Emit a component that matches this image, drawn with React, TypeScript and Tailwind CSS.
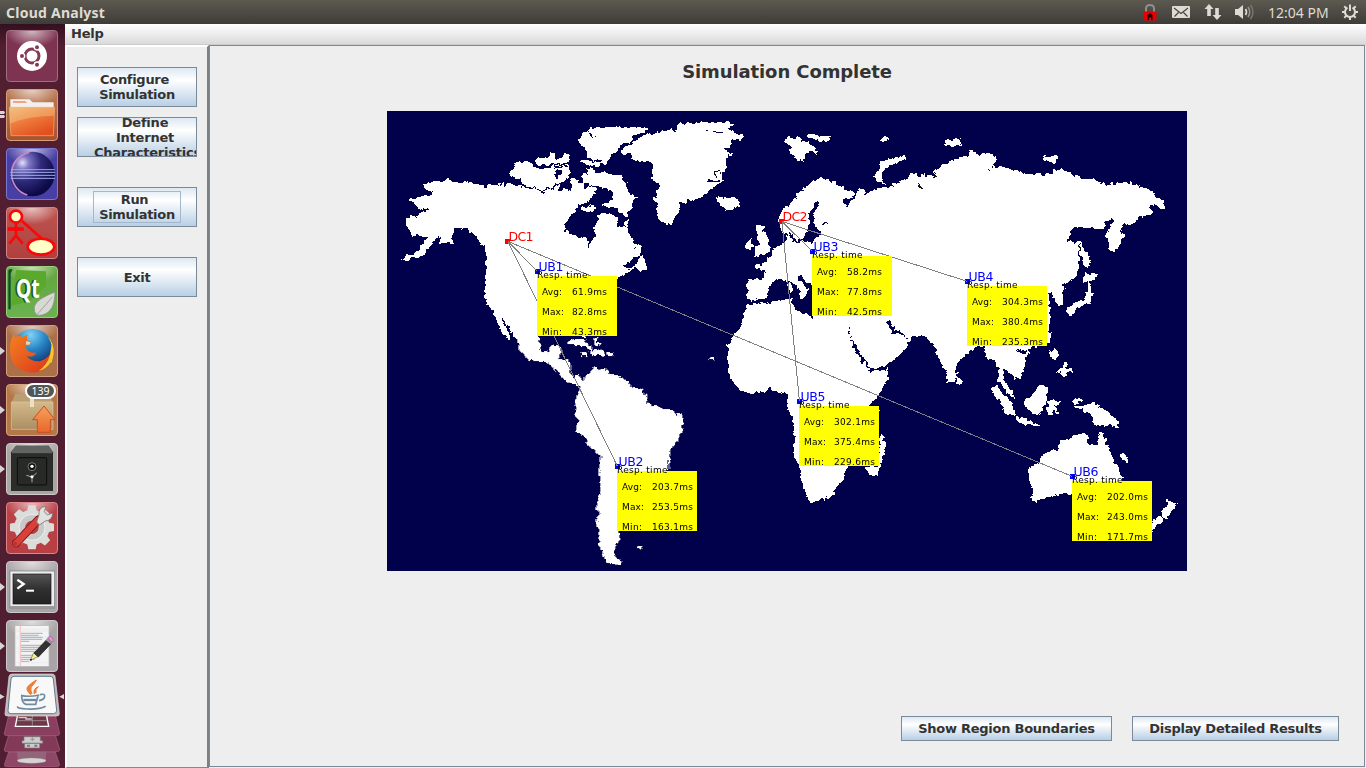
import type { ReactNode } from "react";

const SEA = "#00004b";

type Shapes = { x: number; y: number; land: string[]; water?: string[]; marks?: string[] };

/* Land outlines are stored in thirds of a pixel, one group per map sheet. */
const sheets: Shapes[] = [
  {
    x: 0,
    y: 0,
    land: [
      "45,447 60,430 78,432 95,412 108,400 118,385 125,375 110,378 95,372 75,372 60,348 58,330 72,316 95,312 115,300 130,290 105,296 90,292 82,275 65,268 90,262 105,250 130,252 140,244 118,238 110,222 135,212 165,210 180,204 200,212 240,214 270,218 290,225 298,240 300,222 325,222 345,215 352,226 362,212 380,222 410,228 430,235 455,236 470,250 475,238 500,230 515,222 520,238 540,232 545,245 555,240 550,200 565,198 575,215 590,215 590,240 605,225 625,225 628,240 610,262 600,275 580,275 570,290 560,305 535,335 535,360 560,370 575,378 600,382 606,415 612,390 625,372 618,350 632,335 632,310 650,303 670,308 690,318 692,348 712,348 712,332 725,325 720,345 728,370 740,392 750,402 765,405 760,430 740,442 720,455 708,462 720,475 745,468 755,445 765,430 775,455 782,478 760,480 745,470 720,485 692,500 640,540 600,600 500,660 460,675 460,690 395,690 385,680 372,660 358,640 345,625 350,640 365,665 375,680 365,685 350,670 335,650 325,620 315,595 300,580 295,560 292,540 295,500 298,440 292,400 285,405 275,385 262,372 250,360 230,350 202,352 200,375 195,395 165,400 152,397 165,375 150,380 135,400 115,420 100,440 75,440 60,448",
      "385,152 420,152 440,165 460,175 480,172 500,162 548,162 550,185 545,200 535,205 525,215 505,215 500,228 470,235 440,232 410,225 400,205 385,200 370,195 368,180 380,175",
      "440,150 455,140 485,140 490,125 502,125 503,140 520,140 535,128 550,128 550,150 520,158 490,160 455,164",
      "585,68 605,62 610,50 660,48 780,48 785,55 760,68 735,80 735,92 700,102 690,120 660,148 655,162 620,165 590,160 580,148 600,148 600,118 595,108 575,100 578,80",
      "600,172 620,172 625,185 650,185 670,190 700,192 710,210 720,215 722,240 735,250 750,260 735,275 735,290 725,300 720,320 700,305 690,295 670,290 645,282 660,275 680,262 675,240 655,232 640,228 610,218 590,215 585,195 600,190",
      "585,288 600,292 605,282 625,288 620,303 600,303 585,298",
    ],
    water: ["503,182 512,175 526,180 524,190 512,202 502,195", "604,66 612,66 626,82 620,86", "598,142 620,146 650,149 648,154 600,150", "500,164 545,164 545,168 500,172"],
    marks: ["M348 628L360 645", "M742 405l2 6", "M616 378l6 -4"],
  },
  {
    x: 253,
    y: 0,
    land: [
      "-54,118 -30,100 -12,85 20,72 60,65 70,58 110,58 115,38 160,35 185,30 215,32 270,35 280,45 260,55 285,68 312,75 300,85 270,85 275,100 255,120 280,128 260,138 258,155 255,180 245,185 248,210 225,225 200,245 175,265 150,270 122,275 118,295 105,320 95,342 60,330 50,305 50,280 40,265 55,235 60,220 35,205 35,155 0,150 -20,148 -30,130 -50,128",
      "230,268 235,255 245,253 250,265 275,258 295,268 297,285 280,298 255,295 245,282",
      "432,85 445,78 465,85 475,72 488,90 510,95 535,120 532,132 510,120 495,135 492,150 465,145 465,135 445,120 455,110 450,100 440,98",
      "497,72 515,68 560,75 575,78 560,92 530,90 505,80",
      "722,85 740,75 748,85 735,92 725,92",
      "795,132 798,142 770,155 740,170 725,190 730,205 738,218 710,210 700,200 715,180 720,155 750,145 775,140",
      "350,345 373,342 370,360 382,375 385,395 395,410 380,430 360,432 340,440 350,425 345,410 358,395 350,380",
      "318,392 335,385 340,405 330,415 315,415",
      "418,318 425,300 440,285 455,280 475,245 500,225 525,205 550,200 575,210 600,225 635,240 645,250 630,262 605,262 605,275 620,285 632,270 650,255 658,230 670,230 675,250 690,245 715,232 740,228 760,228 790,212 810,200 830,200 830,640 810,690 520,690 520,520 500,515 480,495 474,500 488,520 510,535 500,548 492,565 480,560 475,548 485,540 465,525 452,508 440,510 420,505 400,512 390,520 385,540 375,565 350,565 335,570 320,565 320,505 370,505 375,480 345,465 375,455 395,430 400,412 410,405 425,400 440,388 445,365 430,370 422,360 418,340",
      "445,515 452,512 457,540 450,548 443,535",
    ],
    water: ["448,360 462,388 488,388 500,362 507,340 508,305 522,285 534,272 540,276 532,292 518,312 526,348 540,358 538,376 520,385 515,395 488,392 460,395 450,378", "545,337 570,334 568,338 548,342", "198,207 212,203 240,212 212,212", "196,58 225,60 256,63 240,66 222,62"],
    marks: ["M244 184l-16 -4 -3 14 6 6", "M572 214h4", "M626 284h5"],
  },
  {
    x: 513,
    y: 0,
    land: [
      "0,215 20,200 35,185 50,190 60,200 70,188 75,200 90,190 108,198 95,180 110,178 120,165 150,150 185,140 208,135 210,120 228,120 230,130 270,130 285,140 288,155 280,168 325,172 335,180 365,182 370,188 455,188 460,175 490,178 515,190 550,205 580,202 590,215 640,220 655,212 690,215 720,228 745,235 765,250 770,262 790,265 795,290 775,290 765,280 745,285 755,300 755,310 715,320 705,338 665,342 662,360 670,370 665,395 650,415 640,428 625,405 618,375 630,350 640,322 620,330 612,342 610,355 585,355 570,348 525,348 515,355 512,375 500,388 525,395 545,388 548,410 560,425 573,450 565,472 552,465 545,440 538,420 538,470 525,495 510,512 492,515 490,545 490,580 475,585 465,565 450,545 442,545 450,575 450,620 445,690 200,690 60,670 15,670 -20,650 -20,215",
      "560,510 570,520 575,550 572,575 550,585 530,590 515,612 498,605 500,590 530,575 555,560 560,540",
      "552,478 570,490 590,490 580,510 550,512",
      "135,88 180,83 190,97 180,105 135,103",
      "427,135 450,138 465,130 475,142 465,158 430,148",
      "0,135 18,130 10,145 0,150",
    ],
    marks: ["M538 400v20", "M257 178h4M266 174h4M276 169h5", "M55 216l6 12 8 5", "M98 188l12 10"],
  },
  {
    x: 133,
    y: 224,
    land: [
      "-8,0 -5,45 20,70 50,78 80,82 100,100 120,118 135,135 160,148 175,150 180,170 170,185 165,205 165,240 182,260 168,268 170,290 195,305 200,325 225,348 240,360 238,400 242,460 235,490 228,520 238,535 226,555 235,580 235,610 240,640 250,665 265,685 300,690 308,683 290,670 282,650 288,630 300,615 298,590 340,500 445,400 445,385 452,345 470,320 485,290 490,260 487,235 470,240 460,225 425,220 410,212 380,205 378,178 360,160 340,160 325,140 300,125 270,118 250,98 240,105 225,97 210,110 195,125 185,135 180,118 165,120 158,130 150,110 152,80 135,72 115,68 124,50 122,32 95,28 85,50 65,48 58,20 60,0",
      "140,30 145,15 170,12 195,16 200,24 218,38 215,45 190,32 150,30",
      "208,58 215,48 240,42 255,52 255,62 230,60",
      "182,52 202,52 202,62 182,62",
      "262,52 280,52 280,62 262,62",
      "222,10 232,10 228,22 245,26 240,32 224,28",
      "185,0 200,0 198,6 186,4",
      "568,73 578,64 584,74 572,76",
      "350,638 358,632 367,634 364,641",
    ],
  },
  {
    x: 333,
    y: 179,
    land: [
      "80,45 100,42 130,40 150,35 215,28 222,60 250,68 280,82 400,60 505,240 505,265 490,290 475,315 445,345 477,360 440,400 430,500 390,530 375,545 365,575 350,590 340,615 300,630 275,637 262,630 255,600 243,570 240,530 220,500 225,440 218,385 200,355 205,310 190,308 160,303 148,292 135,305 95,312 60,300 45,285 25,250 25,165 40,135 65,110 72,80",
      "477,440 485,430 497,455 490,500 475,555 455,558 440,540 442,528 476,528",
      "400,60 386,110 400,150 430,190 460,235 500,225 525,205 560,170 560,150 545,135 520,130 495,95 510,92 525,120 550,130 560,145 580,135 620,140 640,165 660,215 680,245 682,275 700,272 710,265 712,220 740,195 765,170 790,168 800,200 820,210 840,240 840,-100 400,-100",
      "710,258 725,270 722,282 710,288",
    ],
    water: ["386,115 394,148 410,170 426,195 444,228 462,236 505,226 545,205 545,236 505,238 478,240 452,246 430,215 410,190 394,158", "495,92 510,92 525,118 550,128 562,150 545,134 518,132"],
    marks: ["M384 117h6", "M118 38h6"],
  },
  {
    x: 553,
    y: 224,
    land: [
      "80,0 320,0 325,-10 334,-10 330,22 300,33 270,38 265,60 250,65 255,80 255,100 240,125 225,135 218,118 200,108 190,100 190,135 215,170 225,190 200,175 185,145 173,135 178,100 165,75 140,70 130,35 100,30",
      "328,50 340,40 352,46 355,62 345,75 330,68",
      "370,85 380,85 382,98 390,98 400,112 382,115 372,126 362,118 365,108 352,114 355,104 370,100",
      "152,158 170,155 195,180 215,205 225,240 215,243 190,225 185,200 165,185",
      "228,245 260,253 300,270 285,272 228,262",
      "250,195 275,185 300,150 310,150 325,155 320,200 300,240 285,240 262,225",
      "325,200 338,188 345,195 360,200 358,207 343,210 350,220 358,237 345,228 342,222 332,243 320,225",
      "396,200 405,190 425,192 425,200 400,206",
      "402,215 435,210 460,205 490,220 510,240 530,260 540,280 510,270 490,278 462,270 458,245 430,225 405,222",
      "268,400 300,382 303,365 325,350 355,345 360,320 390,310 400,295 440,298 450,308 438,318 460,337 474,330 476,290 490,290 495,320 510,345 520,375 535,395 545,430 545,440 480,500 396,475 350,480 300,495 288,502 275,495 280,470 270,440",
      "680,488 690,500 713,505 705,520 690,530 682,550 670,545 667,523 682,512",
      "650,545 668,542 668,558 655,572 636,587 636,562",
      "538,358 550,358 566,370 562,382 545,372",
    ],
    water: ["230,42 250,48 264,45 252,58 240,56"],
  },
];

const bases = [
  { id: "UB1", x: 150, y: 165, v: ["61.9ms", "82.8ms", "43.3ms"] },
  { id: "UB2", x: 230, y: 360, v: ["203.7ms", "253.5ms", "163.1ms"] },
  { id: "UB3", x: 425, y: 145, v: ["58.2ms", "77.8ms", "42.5ms"] },
  { id: "UB4", x: 580, y: 175, v: ["304.3ms", "380.4ms", "235.3ms"] },
  { id: "UB5", x: 412, y: 295, v: ["302.1ms", "375.4ms", "229.6ms"] },
  { id: "UB6", x: 685, y: 370, v: ["202.0ms", "243.0ms", "171.7ms"] },
];

const centers = [
  { id: "DC1", x: 121, y: 130, to: [0, 1, 5] },
  { id: "DC2", x: 395, y: 110, to: [2, 3, 4] },
];

function WorldMap() {
  return (
    <svg width="800" height="460" viewBox="0 0 800 460" className="block shrink-0 bg-[#00004b] font-['DejaVu_Sans',sans-serif]">
      <defs>
        <filter id="coast" filterUnits="userSpaceOnUse" x="0" y="0" width="800" height="460" colorInterpolationFilters="sRGB">
          <feTurbulence type="fractalNoise" baseFrequency="0.22" numOctaves="2" seed="4" result="n" />
          <feDisplacementMap in="SourceGraphic" in2="n" scale="6" xChannelSelector="R" yChannelSelector="G" />
        </filter>
      </defs>
      <g filter="url(#coast)">
        {sheets.map((s, i) => (
          <g key={i} transform={`translate(${s.x} ${s.y}) scale(0.33333)`} shapeRendering="crispEdges">
            {s.land.map((p, k) => (
              <polygon key={k} points={p} fill="#fff" />
            ))}
          </g>
        ))}
        {sheets.map((s, i) => (
          <g key={i} transform={`translate(${s.x} ${s.y}) scale(0.33333)`} shapeRendering="crispEdges">
            {s.water?.map((p, k) => (
              <polygon key={k} points={p} fill={SEA} />
            ))}
            {s.marks?.map((p, k) => (
              <path key={k} d={p} stroke="#111" strokeWidth="3.5" fill="none" />
            ))}
          </g>
        ))}
      </g>
      {centers.map((c) => (
        <g key={c.id}>
          <rect x={c.x - 3} y={c.y - 2} width="5" height="5" fill="#f00" />
          <text x={c.x + 0.5} y={c.y} fontSize="12.500" fill="#f00" textLength="25">{c.id}</text>
        </g>
      ))}
      {bases.map((b) => (
        <rect key={b.id} x={b.x - 2} y={b.y - 7} width="5" height="5" fill="#00f" />
      ))}
      {centers.map((c) =>
        c.to.map((t) => (
          <line key={t} x1={c.x} y1={c.y + 0.5} x2={bases[t].x + 0.5} y2={bases[t].y - 4.5} stroke="#808080" shapeRendering="crispEdges" />
        )),
      )}
      {bases.map((b) => (
        <g key={b.id} fontSize="9">
          <text x={b.x + 1.5} y={b.y - 5} fontSize="12.500" fill="#00f" textLength="25">{b.id}</text>
          <rect x={b.x} y={b.y} width="80" height="60" fill="#ff0" />
          <text x={b.x} y={b.y + 2} textLength="50.500">Resp. time</text>
          {["Avg:", "Max:", "Min:"].map((l, k) => (
            <g key={l}>
              <text x={b.x + 5} y={b.y + 19 + 20 * k} textLength={k === 1 ? 22 : 20}>{l}</text>
              <text x={b.x + 35} y={b.y + 19 + 20 * k} textLength={b.v[k].length === 6 ? 35 : 41}>{b.v[k]}</text>
            </g>
          ))}
        </g>
      ))}
    </svg>
  );
}

function Tile({ tint, edge, run = 0, children, badge }: { tint: string; edge: string; run?: number; children: ReactNode; badge?: string }) {
  return (
    <div className={`relative h-[52px] w-[52px] shrink-0 rounded-[4px] border ${tint} ${edge}`}>
      <svg width="52" height="52" viewBox="0 0 156 156" className="-m-px block">
        <defs>
          <radialGradient id="shine" cx="50%" cy="0%" r="55%">
            <stop offset="0" stopColor="#fff" stopOpacity=".65" />
            <stop offset="1" stopColor="#fff" stopOpacity="0" />
          </radialGradient>
        </defs>
        <rect x="4" y="3" width="148" height="90" fill="url(#shine)" />
        {children}
      </svg>
      {run === 1 && (
        <svg width="5" height="8" viewBox="0 0 5 8" className="absolute top-[21px] -left-[7px]">
          <path d="M0 0L5 4L0 8z" fill="#d8d3d5" />
        </svg>
      )}
      {run === 2 && (
        <svg width="5" height="8" viewBox="0 0 5 8" className="absolute top-[21px] -left-[7px]">
          <path d="M0 0h4l1 1.500-1 1.500H0zM0 4h4l1 1.500-1 1.500H0z" fill="#d8d3d5" />
        </svg>
      )}
      {badge && (
        <div className="absolute -top-[2px] left-[18px] flex h-[16px] w-[31px] items-center justify-center rounded-full border-2 border-white bg-[#555] font-['Noto_Sans',sans-serif] text-[10.500px] leading-none text-white">
          {badge}
        </div>
      )}
    </div>
  );
}

function Launcher() {
  return (
    <div className="flex w-[65px] shrink-0 flex-col items-start gap-[7px] overflow-hidden bg-linear-to-b from-[#34101f] via-[#521f31] via-[3%] to-[#501e31] pt-[6px] pl-[6px]">
      <Tile tint="bg-[#7e3350]" edge="border-[#a06d81]">
        <circle cx="78" cy="78" r="45" fill="#fff" />
        <circle cx="78" cy="78" r="21" fill="none" stroke="#843a55" strokeWidth="9" />
        <g fill="#843a55" stroke="#fff" strokeWidth="4">
          <circle cx="48" cy="78" r="8" />
          <circle cx="93" cy="52" r="8" />
          <circle cx="93" cy="104" r="8" />
        </g>
      </Tile>
      <Tile tint="bg-linear-to-b from-[#b87a55] to-[#a9532e]" edge="border-[#d8a07a]" run={2}>
        <defs>
          <linearGradient id="fold" x2=".6" y2="1">
            <stop offset="0" stopColor="#f3b36d" />
            <stop offset=".5" stopColor="#ed7b3c" />
            <stop offset="1" stopColor="#e3501f" />
          </linearGradient>
        </defs>
        <path d="M13 31H70L80 40H143V60H13z" fill="#f4efec" />
        <path d="M21 36H58L63 42H21z" fill="#f0a57c" />
        <path d="M10 55H146L142 140H15z" fill="url(#fold)" stroke="#f5b17d" strokeWidth="2" />
        <path d="M11 56H145L143 80Q60 82 12 104z" fill="#f6cf93" opacity=".4" />
      </Tile>
      <Tile tint="bg-[#473fa4]" edge="border-[#7a78d6]">
        <defs>
          <radialGradient id="ecl" cx="28%" cy="25%" r="75%">
            <stop offset="0" stopColor="#e4e0fa" />
            <stop offset=".2" stopColor="#7f76c4" />
            <stop offset=".55" stopColor="#302a7c" />
            <stop offset="1" stopColor="#0d0a48" />
          </radialGradient>
        </defs>
        <circle cx="79" cy="78" r="67" fill="url(#ecl)" />
        <path d="M70 13A66 66 0 0 0 64 141" fill="none" stroke="#c988c6" strokeWidth="5" />
        <path d="M15 65H146M13 73H147M13 82H147M14 91H147" stroke="#9fb0e8" strokeWidth="3" />
      </Tile>
      <Tile tint="bg-linear-to-b from-[#bd5550] to-[#b0403f]" edge="border-[#d58383]">
        <g stroke="#f80808" strokeWidth="8" fill="none">
          <path d="M30 44V88M30 86L10 110M30 86L50 110" />
          <path d="M5 66H53" strokeWidth="11" />
          <path d="M48 42L106 94" />
          <circle cx="30" cy="29" r="18" fill="#ffffc8" />
          <ellipse cx="105" cy="119" rx="40" ry="24" fill="#ffffc8" />
        </g>
      </Tile>
      <Tile tint="bg-linear-to-b from-[#61a63b] to-[#6bb150]" edge="border-[#99cf7f]">
        <path d="M9 10H20L14 22V130H7V14z" fill="#0c5123" />
        <path d="M15 120L70 105 120 60V16L30 12z" fill="#5ba92c" />
        <g fontSize="82" fontWeight="bold" className="font-['Noto_Sans',sans-serif]">
          <text x="25" y="95" fill="#12592a" textLength="70" lengthAdjust="spacingAndGlyphs">Qt</text>
          <text x="30" y="95" fill="#fff" textLength="71" lengthAdjust="spacingAndGlyphs">Qt</text>
        </g>
        <path d="M147 78Q90 100 85 122Q82 138 94 148Q124 150 138 124Q146 108 147 78z" fill="#d8d8d5" stroke="#888" strokeWidth="2" />
        <path d="M92 147L140 92" stroke="#888" strokeWidth="2" />
      </Tile>
      <Tile tint="bg-[#ac7048]" edge="border-[#d3a17c]" run={1}>
        <defs>
          <radialGradient id="globe" cx="45%" cy="15%" r="85%">
            <stop offset="0" stopColor="#7fd2f5" />
            <stop offset=".45" stopColor="#2583c4" />
            <stop offset="1" stopColor="#11235e" />
          </radialGradient>
          <linearGradient id="fox" x2="1" y2="1">
            <stop offset="0" stopColor="#f58220" />
            <stop offset="1" stopColor="#d9341d" />
          </linearGradient>
        </defs>
        <circle cx="80" cy="72" r="60" fill="url(#globe)" />
        <path d="M116 24Q137 45 139 74Q132 105 106 108Q140 118 138 108Q150 70 132 42z" fill="#fbe032" />
        <path d="M24 25L26 38Q37 29 50 36L66 28Q60 38 63 46Q72 48 75 55L58 65Q64 84 91 83Q84 98 62 94Q75 110 101 109Q130 101 137 76Q143 95 132 114Q113 144 77 143Q32 140 15 101Q5 58 24 25z" fill="url(#fox)" />
        <path d="M137 58Q149 80 134 112Q122 132 98 138Q124 119 132 91z" fill="#fbc62d" />
        <path d="M60 48L74 52 70 59 60 59z" fill="#f3d3b0" />
      </Tile>
      <Tile tint="bg-[#b47746]" edge="border-[#d8a578]" run={1} badge="139">
        <defs>
          <linearGradient id="up" x2="0" y2="1">
            <stop offset="0" stopColor="#f5a25a" />
            <stop offset="1" stopColor="#e9662c" />
          </linearGradient>
          <linearGradient id="carton" x2="0" y2="1">
            <stop offset="0" stopColor="#d3b98c" />
            <stop offset="1" stopColor="#ab8e62" />
          </linearGradient>
        </defs>
        <path d="M28 30H128L141 56H16z" fill="#bb9f74" />
        <path d="M16 54H141V136H16z" fill="url(#carton)" stroke="#dfc9a0" strokeWidth="2" />
        <path d="M72 40H84V69H72z" fill="#ecdfc4" />
        <path d="M114 66L147 107H133V145H94V107H80z" fill="url(#up)" stroke="#c94f27" strokeWidth="3" />
      </Tile>
      <Tile tint="bg-[#aaa6a3]" edge="border-[#cfcccb]" run={1}>
        <path d="M30 8H128L141 28V144H15V28z" fill="#2b2d2b" />
        <path d="M30 8H128L140 28H16z" fill="#626462" />
        <path d="M17 29H139" stroke="#868886" strokeWidth="2" />
        <rect x="34" y="44" width="88" height="82" rx="4" fill="#282a28" stroke="#0b0c0b" strokeWidth="3" />
        <circle cx="78" cy="71" r="12" fill="#111" stroke="#777" strokeWidth="3" />
        <circle cx="78" cy="70" r="5" fill="#fff" />
        <path d="M78 102V118M78 102L92 90M78 102L61 97" stroke="#aaa" strokeWidth="3" />
        <circle cx="78" cy="101" r="4.500" fill="#fff" />
      </Tile>
      <Tile tint="bg-linear-to-b from-[#b8434a] to-[#b83f42]" edge="border-[#dc8487]">
        <g fill="#dcdcda">
          <circle cx="78" cy="76" r="53" />
          {[0, 45, 90, 135, 180, 225, 270, 315].map((a) => (
            <path key={a} d="M63 30L67 10H89L93 30z" transform={`rotate(${a} 78 76)`} />
          ))}
        </g>
        <circle cx="78" cy="76" r="39" fill="#c9c9c7" stroke="#eee" strokeWidth="3" />
        <circle cx="78" cy="76" r="20" fill="#b73f43" />
        <path d="M30 124L98 52" stroke="#8d1a1c" strokeWidth="25" strokeLinecap="round" />
        <path d="M30 124L96 54" stroke="#d8403a" strokeWidth="19" strokeLinecap="round" />
        <path d="M92 60L99 38Q96 16 120 13L115 29 124 39 140 33Q139 55 118 57L100 69z" fill="#e2e2e0" stroke="#777" strokeWidth="2.500" />
        <circle cx="28" cy="125" r="5" fill="#b92f2d" />
      </Tile>
      <Tile tint="bg-[#a9a4a5]" edge="border-[#cdc9ca]" run={1}>
        <defs>
          <linearGradient id="scr" x2="0" y2="1">
            <stop offset="0" stopColor="#555" />
            <stop offset=".5" stopColor="#303030" />
            <stop offset="1" stopColor="#222" />
          </linearGradient>
        </defs>
        <rect x="12" y="30" width="134" height="111" fill="#ededed" stroke="#777" strokeWidth="2" />
        <path d="M12 135H146V141H12z" fill="#999" />
        <rect x="21" y="39" width="114" height="90" fill="url(#scr)" stroke="#111" strokeWidth="2" />
        <path d="M34 56L53 69L34 83" fill="none" stroke="#fff" strokeWidth="7" />
        <path d="M60 89H84" stroke="#fff" strokeWidth="6" />
      </Tile>
      <Tile tint="bg-[#a9a4a5]" edge="border-[#cdc9ca]" run={1}>
        <rect x="27" y="17" width="102" height="122" fill="#f4f4f4" stroke="#bbb" strokeWidth="2" />
        <path d="M43 17V138" stroke="#ee9f9f" strokeWidth="2" />
        <path d="M30 28H128M30 34H128M30 50H128M30 56H128M30 84H128M30 95H128M30 128H128" stroke="#dce5f2" strokeWidth="1.500" />
        <path d="M45 40H110M45 46H98M45 52H110M45 58H108M45 64H70M45 76H110M45 82H104M45 88H92M45 94H110M45 106H88M45 112H80M45 118H86M45 124H70" stroke="#8d8d8d" strokeWidth="2" />
        <path d="M73 121L83 98L96 110z" fill="#f4eb93" stroke="#77714a" strokeWidth="2" />
        <path d="M84 99L121 60L135 71L97 111z" fill="#333" stroke="#111" strokeWidth="2" />
        <path d="M119 61L127 52L142 64L134 72z" fill="#999" />
        <path d="M125 54L132 49Q143 53 142 62L138 67z" fill="#e896d2" stroke="#a5558f" strokeWidth="2" />
        <circle cx="75" cy="119" r="3" fill="#222" />
      </Tile>
      <svg width="65" height="96" viewBox="0 0 195 288" className="-mt-[7px] -ml-[6px] block shrink-0">
        <g stroke="#a8627f" strokeWidth="2">
          <path d="M26 240L166 240L179 278Q178 284 172 284H20Q12 284 13 278z" fill="#8e4766" />
          <path d="M26 190L166 190L179 232Q178 239 172 239H20Q12 239 13 232z" fill="#833a58" />
          <path d="M26 130L166 130L179 184Q178 191 172 191H20Q12 191 13 184z" fill="#8a3e60" />
        </g>
        <path d="M51 239H139L137 266Q95 283 53 266z" fill="#93647a" />
        <ellipse cx="95" cy="266" rx="43" ry="8" fill="#d5d3d3" stroke="#999" />
        <path d="M72 194H121V206H128V214H66V206H72zM74 214H119V228H74z" fill="#ccc" stroke="#777" strokeWidth="2" />
        <path d="M81 218H90V224H81zM103 218H112V224H103z" fill="#777" />
        <path d="M97 190V205M91 200L97 205 104 200" fill="none" stroke="#777" strokeWidth="2" />
        <path d="M53 128L46 163H146L139 128" fill="#713548" stroke="#fff" strokeWidth="4" />
        <path d="M97 132V161M52 146H141" stroke="#aaa" strokeWidth="2" />
        <path d="M56 137H78V141H95" stroke="#ccc" strokeWidth="4" fill="none" />
        <path d="M36 6H157Q163 6 165 12L178 125Q178 132 170 132H23Q14 132 15 125L27 13Q29 6 36 6z" fill="#c3bab6" stroke="#e1d9d6" strokeWidth="2" />
        <path d="M42 13H150Q159 13 160 21L170 116Q170 125 160 125H33Q23 125 24 116L33 21Q34 13 42 13z" fill="#f8f8f8" stroke="#5d7b95" strokeWidth="3" />
        <path d="M92 68Q75 52 84 43Q92 34 109 24Q104 35 96 42Q89 50 96 65M103 66Q98 51 115 44Q105 51 108 63" fill="#ef8236" stroke="#e87832" strokeWidth="3" />
        <g fill="none" stroke="#6e8ba2" strokeWidth="5">
          <path d="M63 70Q86 76 118 69M120 68Q138 63 133 77Q130 84 117 86M65 72Q66 95 78 97H107L114 72M53 103Q50 110 80 111Q118 113 137 103" />
          <path d="M70 84H111" strokeWidth="7" />
        </g>
        <path d="M0 66L14 74L0 82zM192 66L178 74L192 82z" fill="#d8d3d5" />
      </svg>
    </div>
  );
}

const face = "border border-[#7a8a99] bg-linear-to-b from-[#dde8f3] via-white via-[32%] to-[#b8cfe5] font-bold text-[#333]";

function SideButton({ lines, focus }: { lines: string[]; focus?: boolean }) {
  return (
    <button className={`relative flex h-[40px] w-[120px] items-center justify-center overflow-hidden text-[13px] leading-[15px] tracking-[-0.300px] ${face}`}>
      <span className="flex flex-col items-center">
        {lines.map((l, i) => (
          <span key={l} className={i < lines.length - 1 ? "pr-[5px]" : ""}>{l}</span>
        ))}
      </span>
      {focus && <span className="absolute inset-x-[15px] top-[3px] bottom-[3px] border border-[#a3b8cc]" />}
    </button>
  );
}

function TopBar() {
  return (
    <header className="flex h-[24px] shrink-0 items-center justify-between bg-linear-to-b from-[#5c5a50] to-[#3d3c38] pr-[8px] pl-[6px] font-['Noto_Sans',sans-serif] text-[#dfdbd2]">
      <span className="pt-px text-[14px] leading-none font-bold tracking-[0.250px]">Cloud Analyst</span>
      <div className="flex items-center">
        <svg width="16" height="18" viewBox="0 0 16 18" className="mr-[14px]">
          <path d="M4 9V5.500Q4 2 8 2T12 5.500V9" fill="none" stroke="#8f8f8b" strokeWidth="2" />
          <rect x="1.500" y="8.500" width="13" height="9" fill="#e80000" />
          <path d="M8 10L4.500 13H5.500V17H7V14.500H9V17H10.500V13H11.500z" fill="#200" />
        </svg>
        <svg width="18" height="12" viewBox="0 0 18 12" className="mr-[14px]">
          <rect width="18" height="12" rx="1" fill="#dfdbd2" />
          <path d="M2 2L9 7.500L16 2M2.500 10.500L6.500 6.500M15.500 10.500L11.500 6.500" fill="none" stroke="#46453f" strokeWidth="1.200" />
        </svg>
        <svg width="18" height="16" viewBox="0 0 18 16" className="mr-[13px]">
          <path d="M5 0L9.500 5H6.800V12H3.200V5H.5zM13 16L8.500 11H11.200V4H14.800V11H17.500z" fill="#dfdbd2" />
        </svg>
        <svg width="20" height="16" viewBox="0 0 20 16" className="mr-[13px]">
          <path d="M0 5H3L8 1V15L3 11H0z" fill="#dfdbd2" />
          <path d="M10.500 5Q12.500 8 10.500 11" fill="none" stroke="#dfdbd2" strokeWidth="1.600" />
          <path d="M13 3Q16.500 8 13 13" fill="none" stroke="#99968e" strokeWidth="1.500" />
          <path d="M15.500 1Q20.500 8 15.500 15" fill="none" stroke="#77756d" strokeWidth="1.500" />
        </svg>
        <span className="mr-[13px] w-[61px] pt-px text-[14px] leading-none whitespace-nowrap">12:04 PM</span>
        <svg width="16" height="16" viewBox="0 0 16 16">
          <g stroke="#dfdbd2" fill="none" strokeWidth="2">
            <path d="M5.500 3.700A5 5 0 1 0 10.500 3.700" />
            <path d="M8 .5V7" />
            <path d="M0 8H3M13 8H16M2.300 2.300L4.400 4.400M13.700 2.300L11.600 4.400M2.300 13.700L4.400 11.600M13.700 13.700L11.600 11.600M8 13V16" />
          </g>
        </svg>
      </div>
    </header>
  );
}

export default function App() {
  return (
    <div className="flex h-[768px] w-[1366px] flex-col overflow-hidden bg-[#eee] font-['DejaVu_Sans',sans-serif]">
      <TopBar />
      <div className="flex min-h-0 flex-1">
        <Launcher />
        <div className="flex min-w-0 flex-1 flex-col">
          <div className="flex h-[21px] shrink-0 items-center border-b border-[#ccc] bg-linear-to-b from-white to-[#dadada] pb-[1px] pl-[6px] text-[13px] leading-none font-bold tracking-[-0.200px] text-[#333]">
            Help
          </div>
          <div className="flex min-h-0 flex-1">
            <aside className="flex w-[144px] shrink-0 flex-col items-start border-t-2 border-r-2 border-b border-l-2 border-t-white border-r-[#7b8085] border-b-[#888] border-l-white pt-[20px] pl-[10px]">
              <SideButton lines={["Configure", "Simulation"]} />
              <div className="h-[10px]" />
              <button className={`flex h-[40px] w-[120px] items-start overflow-hidden pl-[17px] text-[13px] leading-[15px] tracking-[-0.200px] ${face}`}>
                <span className="-mt-[3px] flex w-[105px] shrink-0 flex-col items-center">
                  <span className="pr-[5px]">Define</span>
                  <span className="pr-[5px]">Internet</span>
                  <span>Characteristics</span>
                </span>
              </button>
              <div className="h-[30px]" />
              <SideButton lines={["Run", "Simulation"]} focus />
              <div className="h-[30px]" />
              <SideButton lines={["Exit"]} />
            </aside>
            <main className="mr-px mb-px flex min-w-0 flex-1 flex-col items-center border border-[#7a8a99]">
              <h1 className="mt-[15px] h-[22px] text-[18px] leading-[22px] font-bold tracking-[-0.100px] text-[#333]">Simulation Complete</h1>
              <div className="mt-[28px] flex">
                <WorldMap />
              </div>
              <div className="mt-auto mb-[25px] flex gap-[20px] self-end pr-[25px]">
                <button className={`h-[25px] w-[211px] text-[13px] leading-none tracking-[-0.250px] ${face}`}>Show Region Boundaries</button>
                <button className={`h-[25px] w-[207px] text-[13px] leading-none tracking-[-0.250px] ${face}`}>Display Detailed Results</button>
              </div>
            </main>
          </div>
        </div>
      </div>
    </div>
  );
}
